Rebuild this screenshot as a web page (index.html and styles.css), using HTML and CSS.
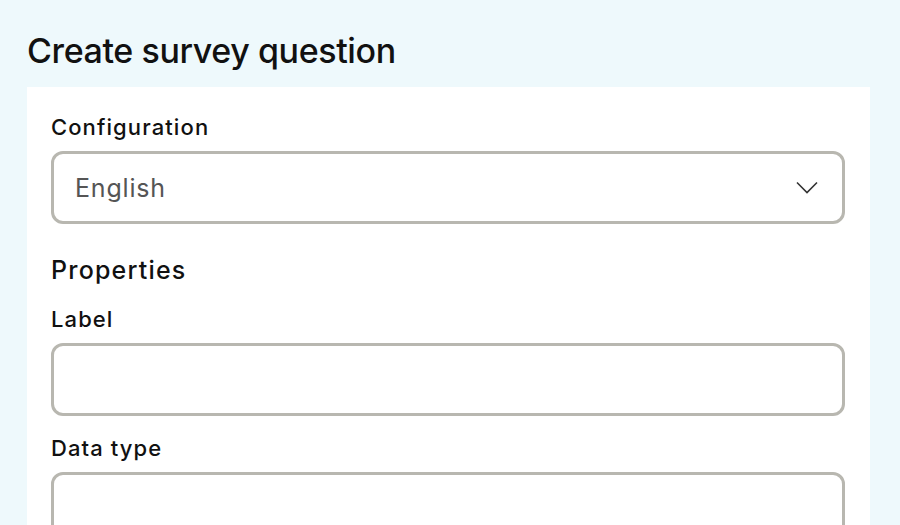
FILE: index.html
```html
<!DOCTYPE html>
<html lang="en">
<head>
<meta charset="utf-8">
<title>Create survey question</title>
<link rel="stylesheet" href="styles.css">
</head>
<body>
<div class="page">
  <h1 class="title">Create survey question</h1>
  <div class="card">
    <div class="field-label">Configuration</div>
    <div class="select">
      <span class="select-value">English</span>
      <svg class="chevron" width="22" height="13" viewBox="0 0 22 13"><path d="M1 1.5 L11 11.5 L21 1.5" fill="none" stroke="#333" stroke-width="1.6"/></svg>
    </div>
    <div class="section-title">Properties</div>
    <div class="field-label">Label</div>
    <div class="input"></div>
    <div class="field-label field-gap">Data type</div>
    <div class="input"></div>
  </div>
</div>
</body>
</html>
```

FILE: styles.css
```css
html, body {
  margin: 0;
  padding: 0;
  background: #eef9fc;
  font-family: Inter, "Noto Sans", sans-serif;
  color: #111;
}
.page {
  padding: 31px 30px 0 27px;
}
.title {
  margin: 0 0 16px 0;
  font-size: 34px;
  line-height: 40px;
  font-weight: 500;
  letter-spacing: -0.4px;
}
.card {
  background: #fff;
  padding: 26px 25px 40px 24px;
  height: 600px;
}
.field-label {
  font-size: 22px;
  line-height: 28px;
  font-weight: 500;
  letter-spacing: 1.1px;
  margin-bottom: 10px;
}
.field-gap {
  margin-top: 18px;
}
.select, .input {
  box-sizing: border-box;
  height: 73px;
  border: 3px solid #b8b7b0;
  border-radius: 12px;
  background: #fff;
}
.select {
  display: flex;
  align-items: center;
  justify-content: space-between;
  padding: 0 24px 0 21px;
}
.select-value {
  font-size: 25px;
  letter-spacing: 0.8px;
  color: #555;
}
.chevron {
  display: block;
}
.section-title {
  font-size: 25px;
  line-height: 30px;
  font-weight: 500;
  letter-spacing: 1.2px;
  margin: 31px 0 20px 0;
}
```
